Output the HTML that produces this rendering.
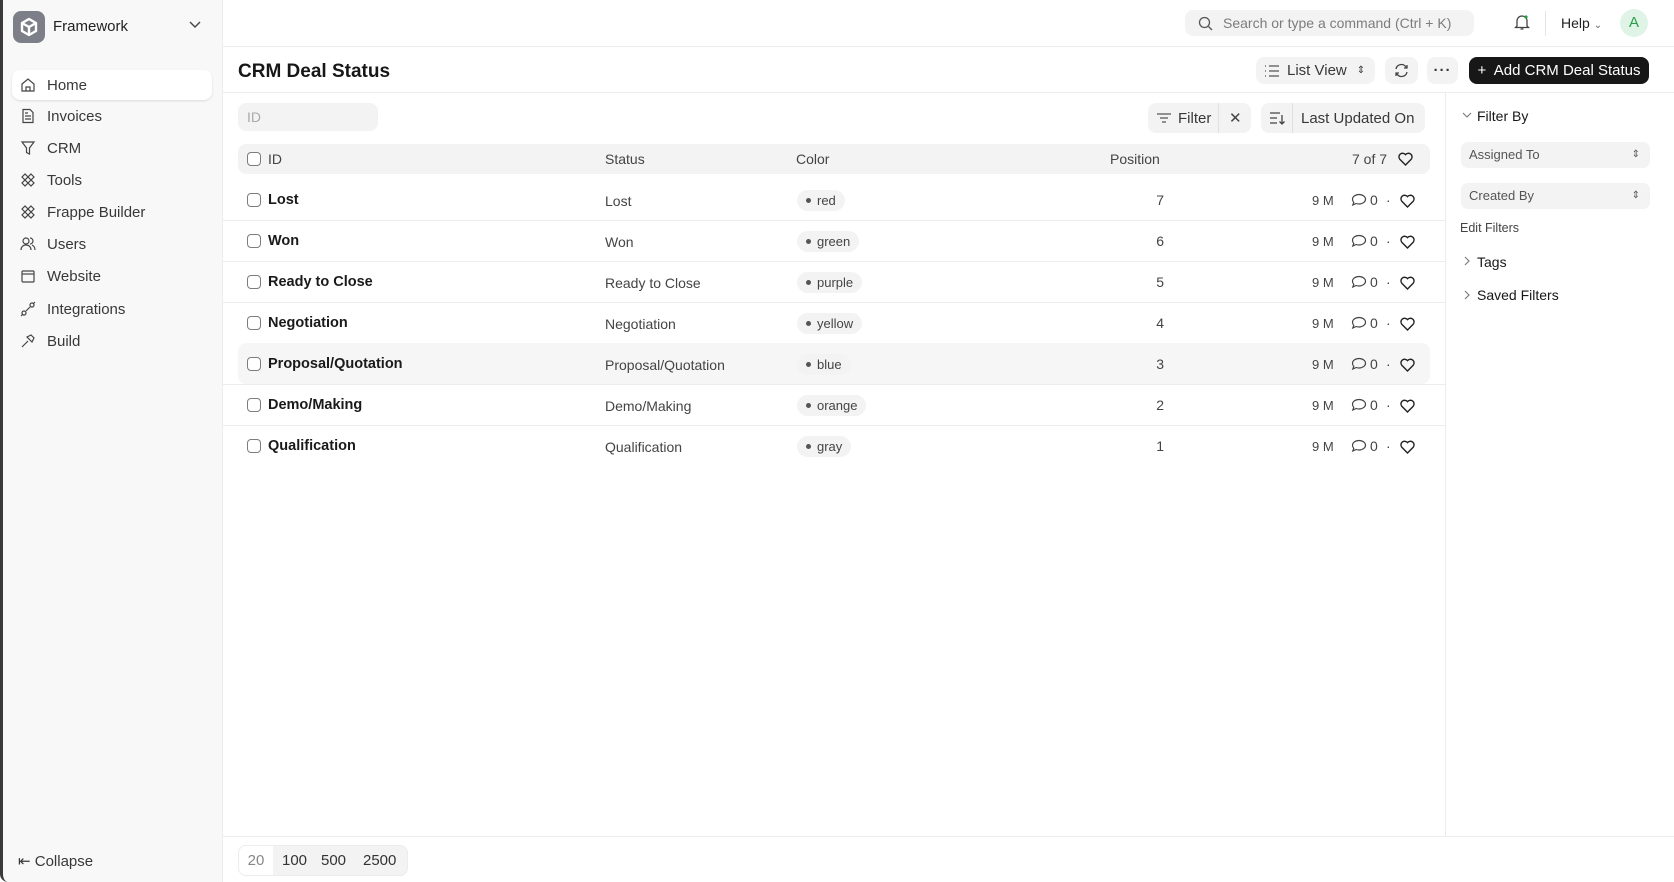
<!DOCTYPE html>
<html><head><meta charset="utf-8"><style>
*{box-sizing:border-box;margin:0;padding:0}
body{width:1674px;height:882px;overflow:hidden;background:#fff;font-family:"Liberation Sans",sans-serif;color:#1f2328;position:relative}
.a{position:absolute}
.side{left:0;top:0;width:223px;height:882px;background:#f8f8f8;border-right:1px solid #ececec;border-left:3px solid #3a3a3a;border-bottom-left-radius:8px}
.nav{position:absolute;left:12px;width:200px;height:30px;font-size:15px;color:#383838;display:flex;align-items:center}
.nav svg{position:absolute;left:8px}
.nav span{position:absolute;left:35px}
.nav.act{background:#fff;border-radius:8px;box-shadow:0 1px 2px rgba(0,0,0,.12)}
.btn{position:absolute;background:#f3f3f3;border-radius:8px;font-size:15px;color:#383838;display:flex;align-items:center}
.row{position:absolute;left:223px;width:1222px;height:41px;border-bottom:1px solid #ededed;font-size:14px}
.row .t{position:absolute;top:0;line-height:41px}
.cb{position:absolute;left:24px;top:13px;width:14px;height:14px;border:1.3px solid #7c7c7c;border-radius:4px;background:#fff}
.pill{position:absolute;left:574px;top:10px;height:21px;line-height:21px;border-radius:11px;background:#f3f3f3;padding:0 9px 0 20px;font-size:13px;color:#444}
.pill:before{content:"";position:absolute;left:9px;top:8px;width:5px;height:5px;border-radius:50%;background:#555}
.sel{position:absolute;left:1461px;width:189px;height:26px;background:#f3f3f3;border-radius:7px;font-size:13px;color:#555;line-height:26px;padding-left:8px}
</style></head><body>
<div class="a side">
  <div class="a" style="left:10px;top:11px;width:32px;height:32px;border-radius:8px;background:#7c7f88">
    <svg width="32" height="32" viewBox="0 0 32 32"><path d="M16 8l7 4v8l-7 4-7-4v-8z" fill="none" stroke="#fff" stroke-width="2.4" stroke-linejoin="round"/><path d="M9 12l7 4 7-4M16 16v8" fill="none" stroke="#fff" stroke-width="2.4"/></svg>
  </div>
  <div class="a" style="left:50px;top:18px;font-size:15px;color:#222">Framework</div>
  <svg class="a" style="left:186px;top:21px" width="12" height="8" viewBox="0 0 12 8"><path d="M1 1l5 5 5-5" fill="none" stroke="#444" stroke-width="1.4"/></svg>
  <div class="nav act" style="top:70px;left:9px"><svg width="16" height="16" viewBox="0 0 16 16" fill="none" stroke="#444" stroke-width="1.2"><path d="M2 7l6-5 6 5v7H2z"/><path d="M6 14v-4h4v4"/></svg><span>Home</span></div>
  <div class="nav" style="top:101px;left:9px"><svg width="16" height="16" viewBox="0 0 16 16" fill="none" stroke="#444" stroke-width="1.2"><path d="M3 1.5h7l3 3v10H3z M5 8h6M5 11h6M5 5h3"/></svg><span>Invoices</span></div>
  <div class="nav" style="top:133px;left:9px"><svg width="16" height="16" viewBox="0 0 16 16" fill="none" stroke="#444" stroke-width="1.2"><path d="M2 2h12L9.5 8v6l-3-1.5V8z"/></svg><span>CRM</span></div>
  <div class="nav" style="top:165px;left:9px"><svg width="16" height="16" viewBox="0 0 16 16" fill="none" stroke="#444" stroke-width="1.2"><path d="M2 5l3-3 9 9-3 3z M11 2l3 3-9 9-3-3z"/></svg><span>Tools</span></div>
  <div class="nav" style="top:197px;left:9px"><svg width="16" height="16" viewBox="0 0 16 16" fill="none" stroke="#444" stroke-width="1.2"><path d="M2 5l3-3 9 9-3 3z M11 2l3 3-9 9-3-3z"/></svg><span>Frappe Builder</span></div>
  <div class="nav" style="top:229px;left:9px"><svg width="16" height="16" viewBox="0 0 16 16" fill="none" stroke="#444" stroke-width="1.2"><circle cx="6" cy="5" r="3"/><path d="M1 14c0-3 2-5 5-5s5 2 5 5M10 2a3 3 0 010 6M12 9c2 1 3 3 3 5"/></svg><span>Users</span></div>
  <div class="nav" style="top:261px;left:9px"><svg width="16" height="16" viewBox="0 0 16 16" fill="none" stroke="#444" stroke-width="1.2"><rect x="2" y="3" width="12" height="11" rx="1"/><path d="M2 6h12"/></svg><span>Website</span></div>
  <div class="nav" style="top:294px;left:9px"><svg width="16" height="16" viewBox="0 0 16 16" fill="none" stroke="#444" stroke-width="1.2"><circle cx="4" cy="12" r="2"/><circle cx="12" cy="4" r="2"/><path d="M6 10l4-4M1 15l2-2M13 3l2-2"/></svg><span>Integrations</span></div>
  <div class="nav" style="top:326px;left:9px"><svg width="16" height="16" viewBox="0 0 16 16" fill="none" stroke="#444" stroke-width="1.2"><path d="M2 14l6-6M7 4l4-2 3 3-2 4z"/></svg><span>Build</span></div>
  <div class="a" style="left:15px;top:852px;font-size:15px;color:#383838">⇤ Collapse</div>
</div>

<div class="a" style="left:223px;top:46px;width:1451px;height:1px;background:#ececec"></div>
<div class="btn" style="left:1185px;top:10px;width:289px;height:26px;color:#7c7c7c;font-size:14px"><svg style="margin:0 10px 0 13px" width="15" height="15" viewBox="0 0 15 15" fill="none" stroke="#555" stroke-width="1.3"><circle cx="6.5" cy="6.5" r="5"/><path d="M10.5 10.5l3.5 3.5"/></svg>Search or type a command (Ctrl + K)</div>
<svg class="a" style="left:1514px;top:13px" width="16" height="18" viewBox="0 0 16 18" fill="none" stroke="#444" stroke-width="1.3"><path d="M3 13V8a5 5 0 0110 0v5l1.5 1.5h-13zM6.5 16h3"/><circle cx="12" cy="4" r="1.6" fill="#2a9d4a" stroke="none"/></svg>
<div class="a" style="left:1545px;top:11px;width:1px;height:25px;background:#e5e5e5"></div>
<div class="a" style="left:1561px;top:15px;font-size:14px;color:#222">Help <span style="font-size:10px;color:#666">⌄</span></div>
<div class="a" style="left:1620px;top:9px;width:28px;height:28px;border-radius:50%;background:#dff3e6;color:#2a9d4a;font-size:15px;text-align:center;line-height:28px">A</div>

<div class="a" style="left:238px;top:61px;font-size:19px;font-weight:bold;color:#171717">CRM Deal Status</div>
<div class="btn" style="left:1256px;top:57px;width:119px;height:27px"><svg style="margin:0 8px 0 9px" width="14" height="12" viewBox="0 0 14 12" fill="none" stroke="#555" stroke-width="1.2"><path d="M0 1h1M0 6h1M0 11h1M4 1h10M4 6h10M4 11h10"/></svg>List View<span style="margin-left:10px;font-size:10px">⇕</span></div>
<div class="btn" style="left:1385px;top:57px;width:33px;height:27px;justify-content:center"><svg width="15" height="15" viewBox="0 0 15 15" fill="none" stroke="#444" stroke-width="1.3"><path d="M2 6a5.5 5.5 0 0110-2l1 1M13 9a5.5 5.5 0 01-10 2l-1-1M13 2v3h-3M2 13v-3h3"/></svg></div>
<div class="btn" style="left:1427px;top:57px;width:31px;height:27px;justify-content:center;font-weight:bold;letter-spacing:1px">···</div>
<div class="btn" style="left:1469px;top:57px;width:180px;height:27px;background:#171717;color:#fff;justify-content:center;font-size:15px">+&nbsp; Add CRM Deal Status</div>
<div class="a" style="left:223px;top:92px;width:1451px;height:1px;background:#ececec"></div>
<div class="a" style="left:1445px;top:93px;width:1px;height:744px;background:#ececec"></div>

<div class="btn" style="left:238px;top:103px;width:140px;height:28px;color:#aaa;font-size:14px;padding-left:9px">ID</div>
<div class="btn" style="left:1148px;top:103px;width:103px;height:30px"><svg style="margin:0 7px 0 9px" width="14" height="10" viewBox="0 0 14 10" fill="none" stroke="#555" stroke-width="1.3"><path d="M0 1h14M3 5h8M5 9h4"/></svg>Filter<span style="position:absolute;left:70px;top:0;width:1px;height:30px;background:#e0e0e0"></span><span style="position:absolute;left:81px;font-size:15px;color:#444">✕</span></div>
<div class="btn" style="left:1261px;top:103px;width:164px;height:30px"><svg style="margin:0 0 0 9px" width="16" height="14" viewBox="0 0 16 14" fill="none" stroke="#444" stroke-width="1.3"><path d="M0 2h10M0 7h7M0 12h7M12 4v9M9.5 10.5l2.5 2.5 2.5-2.5"/></svg><span style="position:absolute;left:31px;top:0;width:1px;height:30px;background:#e0e0e0"></span><span style="position:absolute;left:40px">Last Updated On</span></div>

<div class="a" style="left:238px;top:144px;width:1192px;height:30px;background:#f3f3f3;border-radius:8px;font-size:14px;color:#444">
  <div class="cb" style="left:9px;top:8px;background:#fff"></div>
  <div class="a" style="left:30px;top:7px">ID</div>
  <div class="a" style="left:367px;top:7px">Status</div>
  <div class="a" style="left:558px;top:7px">Color</div>
  <div class="a" style="left:872px;top:7px">Position</div>
  <div class="a" style="left:1114px;top:7px">7 of 7</div>
  <svg class="a" style="left:1160px;top:8px" width="15" height="14" viewBox="0 0 15 14" fill="none" stroke="#222" stroke-width="1.4"><path d="M7.5 13L1.8 7.3A3.3 3.3 0 017.5 2.6a3.3 3.3 0 015.7 4.7z"/></svg>
</div>

<div class="a" style="left:238px;top:343px;width:1192px;height:41px;background:#f6f6f6;border-radius:8px"></div>

<div id="rows"></div>
<script>
var d=[["Lost","red",7],["Won","green",6],["Ready to Close","purple",5],["Negotiation","yellow",4],["Proposal/Quotation","blue",3],["Demo/Making","orange",2],["Qualification","gray",1]];
var h="";
d.forEach(function(r,i){var top=180+i*41;
h+='<div class="row" style="top:'+top+'px;'+(i==6?'border-bottom:none':'')+(i==3?'border-bottom-color:transparent':'')+'">'+
'<div class="cb"></div><div class="t" style="left:45px;font-weight:bold;color:#1a1a1a;font-size:14.5px">'+r[0]+'</div>'+
'<div class="t" style="left:382px;color:#444;top:1px">'+r[0]+'</div>'+
'<div class="pill">'+r[1]+'</div>'+
'<div class="t" style="left:930px;width:11px;text-align:right;color:#444">'+r[2]+'</div>'+
'<div class="t" style="left:1089px;color:#444;font-size:13px">9 M</div>'+
'<svg style="position:absolute;left:1128px;top:13px" width="16" height="14" viewBox="0 0 16 14" fill="none" stroke="#444" stroke-width="1.2"><path d="M8 1.5c3.6 0 6.5 2.1 6.5 4.7S11.6 11 8 11c-1 0-2-.2-2.8-.5L1.8 12l1-2.6C1.9 8.5 1.5 7.4 1.5 6.2 1.5 3.6 4.4 1.5 8 1.5z"/></svg>'+
'<div class="t" style="left:1147px;color:#444">0</div><div class="t" style="left:1163px;color:#444">·</div>'+
'<svg style="position:absolute;left:1177px;top:14px" width="15" height="14" viewBox="0 0 15 14" fill="none" stroke="#222" stroke-width="1.4"><path d="M7.5 13L1.8 7.3A3.3 3.3 0 017.5 2.6a3.3 3.3 0 015.7 4.7z"/></svg></div>';});
document.getElementById("rows").innerHTML=h;
</script>

<svg class="a" style="left:1462px;top:112px" width="10" height="7" viewBox="0 0 10 7"><path d="M1 1l4 4 4-4" fill="none" stroke="#777" stroke-width="1.1"/></svg>
<div class="a" style="left:1477px;top:108px;font-size:14px;color:#171717">Filter By</div>
<div class="sel" style="top:142px">Assigned To<span style="position:absolute;right:10px;font-size:10px">⇕</span></div>
<div class="sel" style="top:183px">Created By<span style="position:absolute;right:10px;font-size:10px">⇕</span></div>
<div class="a" style="left:1460px;top:221px;font-size:12.5px;color:#444">Edit Filters</div>
<svg class="a" style="left:1464px;top:256px" width="7" height="10" viewBox="0 0 7 10"><path d="M1 1l4 4-4 4" fill="none" stroke="#777" stroke-width="1.1"/></svg>
<div class="a" style="left:1477px;top:254px;font-size:14px;color:#171717">Tags</div>
<svg class="a" style="left:1464px;top:290px" width="7" height="10" viewBox="0 0 7 10"><path d="M1 1l4 4-4 4" fill="none" stroke="#777" stroke-width="1.1"/></svg>
<div class="a" style="left:1477px;top:287px;font-size:14px;color:#171717">Saved Filters</div>

<div class="a" style="left:223px;top:836px;width:1451px;height:1px;background:#ececec"></div>
<div class="a" style="left:238px;top:845px;width:170px;height:31px;border:1px solid #ececec;border-radius:8px;background:#f3f3f3;font-size:15px;color:#333;overflow:hidden">
  <div class="a" style="left:0;top:0;width:34px;height:29px;background:#fff;color:#888;line-height:29px;text-align:center">20</div>
  <div class="a" style="left:43px;top:0;line-height:29px">100</div>
  <div class="a" style="left:82px;top:0;line-height:29px">500</div>
  <div class="a" style="left:124px;top:0;line-height:29px">2500</div>
</div>
</body></html>
